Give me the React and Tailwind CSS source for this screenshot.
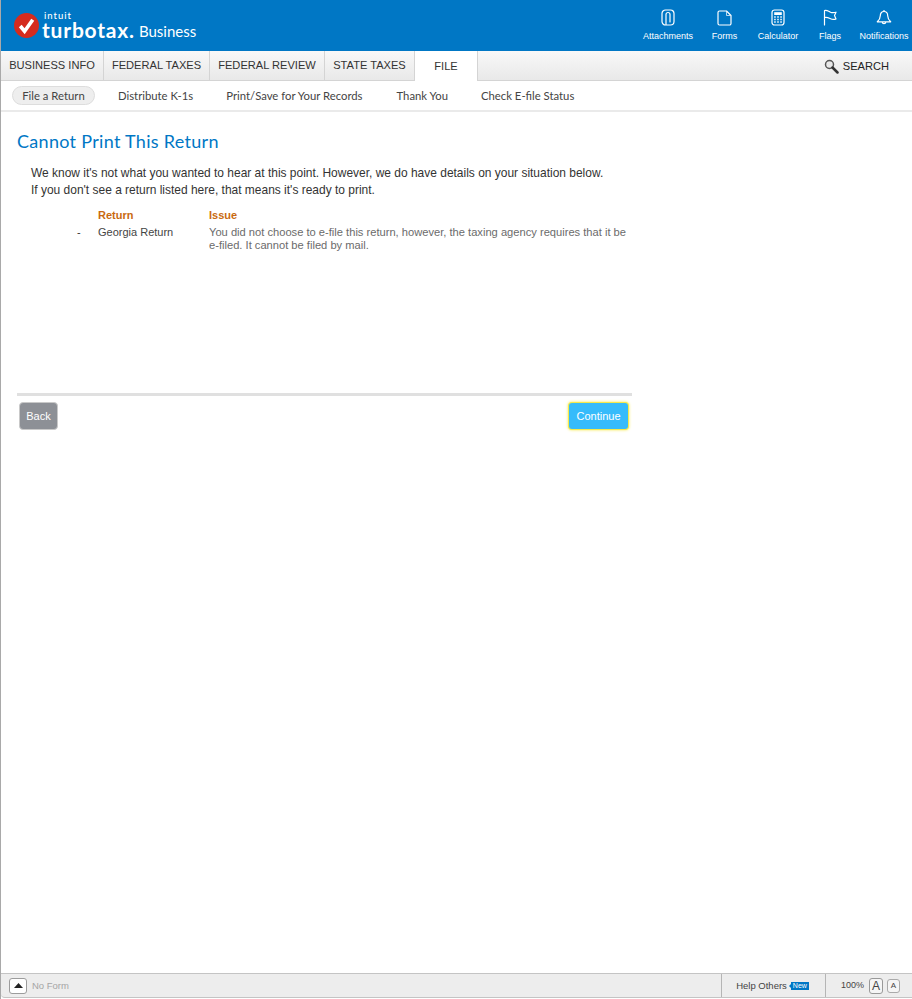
import React from "react";

const IconClip = () => (
  <svg width="14" height="17" viewBox="0 0 14 17" fill="none" stroke="white" strokeWidth="1.200" strokeLinecap="round">
    <path d="M9.500 1H4.500A3.500 3.500 0 0 0 1 4.500v8A3.500 3.500 0 0 0 4.500 16h5a3.500 3.500 0 0 0 3.500-3.500v-8A3.500 3.500 0 0 0 9.500 1z" />
    <path d="M5 15.500V5.500a2 2 0 0 1 4 0V13" />
  </svg>
);

const IconForm = () => (
  <svg width="15" height="16" viewBox="0 0 15 16" fill="none" stroke="white" strokeWidth="1.200" strokeLinejoin="round">
    <path d="M2.500 1H9.500L14 5.500V13.500A1.500 1.500 0 0 1 12.500 15h-10A1.500 1.500 0 0 1 1 13.500v-11A1.500 1.500 0 0 1 2.500 1z" />
    <path d="M9.500 1.500V5.500H13.500" strokeWidth="0.700" />
  </svg>
);

const IconCalc = () => (
  <svg width="14" height="17" viewBox="0 0 14 17" fill="none" stroke="white" strokeWidth="1.200">
    <rect x="1" y="1" width="12" height="15" rx="2.500" />
    <rect x="3.200" y="3.200" width="7.600" height="2.800" fill="white" stroke="none" />
    <path d="M3.200 8h7.600M3.200 10.500h7.600M3.200 13h7.600" strokeWidth="1.300" strokeDasharray="1.500 1.550" />
  </svg>
);

const IconFlag = () => (
  <svg width="15" height="17" viewBox="0 0 15 17" fill="none" stroke="white" strokeWidth="1.200" strokeLinejoin="round" strokeLinecap="round">
    <path d="M1.500 16V1.500C4 1 5.500 2.300 7.500 3.200c2 .8 3.500.6 5.500 0L11.500 6.500 13 10c-2.500 1-4 .5-6-.5C5 8.500 3.500 8 1.500 8.500" />
  </svg>
);

const IconBell = () => (
  <svg width="16" height="17" viewBox="0 0 16 17" fill="none" stroke="white" strokeWidth="1.200" strokeLinejoin="round">
    <path d="M8 2.500c-2.600 0-3.700 2-3.700 4.300 0 2.700-1 4.200-3 6h13.400c-2-1.800-3-3.300-3-6 0-2.300-1.100-4.300-3.700-4.300z" />
    <path d="M8 2.500V1M6.300 13a1.700 1.700 0 0 0 3.400 0" />
  </svg>
);

const IconSearch = () => (
  <svg width="15" height="15" viewBox="0 0 15 15" fill="none">
    <circle cx="5.500" cy="5.500" r="4" stroke="#555" strokeWidth="1.500" fill="#e8e8e8" />
    <path d="M8.500 8.500l5 5" stroke="#333" strokeWidth="2.500" strokeLinecap="round" />
  </svg>
);

const tools = [
  { label: "Attachments", icon: <IconClip />, cls: "w-[58px]" },
  { label: "Forms", icon: <IconForm />, cls: "w-[55px]" },
  { label: "Calculator", icon: <IconCalc />, cls: "w-[52px]" },
  { label: "Flags", icon: <IconFlag />, cls: "w-[52px]" },
  { label: "Notifications", icon: <IconBell />, cls: "w-[56px]" },
];

const tabs = [
  { label: "BUSINESS INFO", cls: "w-[103px]" },
  { label: "FEDERAL TAXES", cls: "w-[106px]" },
  { label: "FEDERAL REVIEW", cls: "w-[115px]" },
  { label: "STATE TAXES", cls: "w-[90px]" },
];

export default function App() {
  return (
    <div className="h-[999px] w-[912px] overflow-hidden flex flex-col bg-white border-l border-[#a9a9a9] font-['Liberation_Sans',sans-serif]">
      <header className="h-[51px] shrink-0 bg-[#0077c5] flex justify-between text-white">
        <div className="flex items-start pl-[13px] pt-[13px]">
          <svg width="25" height="25" viewBox="0 0 26 26">
            <circle cx="13" cy="13" r="13" fill="#d52b1e" />
            <path d="M6.500 13.500l4.500 5.500L19.500 7" fill="none" stroke="white" strokeWidth="3.800" />
          </svg>
          <div className="ml-[3px] -mt-[2px] flex flex-col font-['Lato',sans-serif]">
            <span className="pl-[2px] text-[9.500px] leading-[10px] font-medium tracking-[1px]">intuit</span>
            <span className="mt-[1px] text-[21px] leading-[16px] font-bold tracking-[0.8px] whitespace-nowrap">turbotax.</span>
          </div>
          <span className="ml-[4px] mt-[8px] text-[15px] leading-5 font-['Lato',sans-serif]">Business</span>
        </div>
        <div className="flex">
          {tools.map((t) => (
            <div key={t.label} className={`${t.cls} flex flex-col items-center pt-[9px]`}>
              <div className="h-[17px] flex items-center">{t.icon}</div>
              <span className="mt-[3px] text-[9px] leading-[14px] whitespace-nowrap">{t.label}</span>
            </div>
          ))}
        </div>
      </header>

      <nav className="h-[30px] shrink-0 flex bg-gradient-to-b from-[#f8f8f8] to-[#e9e9e9] border-b border-[#d4d4d4] text-[11.100px] text-[#333]">
        {tabs.map((t) => (
          <div key={t.label} className={`${t.cls} flex items-center justify-center border-r border-[#d4d4d4] whitespace-nowrap`}>
            {t.label}
          </div>
        ))}
        <div className="w-[63px] h-[30px] flex items-center justify-center bg-white border-r border-[#d4d4d4]">FILE</div>
        <div className="flex items-center gap-[4px] ml-auto mr-[23px] pt-[2px] text-[#222]">
          <IconSearch />
          <span>SEARCH</span>
        </div>
      </nav>

      <div className="h-[31px] shrink-0 flex items-center pl-[11px] border-b-2 border-[#eaeaea] text-[11.300px] text-[#444] font-['Lato',sans-serif] whitespace-nowrap">
        <span className="h-[19px] w-[83px] pt-px flex items-center justify-center rounded-full bg-[#eeeeee] border border-[#dddddd]">File a Return</span>
        <span className="ml-[23px] pt-[2px]">Distribute K-1s</span>
        <span className="ml-[33px] pt-[2px]">Print/Save for Your Records</span>
        <span className="ml-[34px] pt-[2px]">Thank You</span>
        <span className="ml-[33px] pt-[2px]">Check E-file Status</span>
      </div>

      <main className="flex-1 pl-[16px] pt-[18px]">
        <div className="w-[615px]">
          <h1 className="text-[18px] leading-[22px] text-[#0077c5] font-['Lato',sans-serif] tracking-[0.3px]">Cannot Print This Return</h1>
          <p className="mt-[13px] pl-[14px] text-[11.970px] leading-[17px] text-[#333] whitespace-nowrap">
            We know it's not what you wanted to hear at this point. However, we do have details on your situation below.
            <br />
            If you don't see a return listed here, that means it's ready to print.
          </p>
          <div className="mt-[6px] grid grid-cols-[21px_111px_1fr] pl-[60px] text-[11px] leading-[13px]">
            <span />
            <span className="font-bold text-[#c96a10] leading-[21px]">Return</span>
            <span className="font-bold text-[#c96a10] leading-[21px]">Issue</span>
            <span className="text-[#333]">-</span>
            <span className="text-[#444]">Georgia Return</span>
            <span className="text-[#6b6b6b] text-[11.150px] w-[425px]">
              You did not choose to e-file this return, however, the taxing agency requires that it be e&#8209;filed. It cannot be filed by mail.
            </span>
          </div>
          <div className="mt-[141px] h-[3px] bg-[#e0e0e0]" />
          <div className="mt-[6px] flex justify-between pl-[2px] pr-[4px]">
            <button className="h-[28px] w-[39px] rounded-[4px] bg-[#8d9096] border border-[#c9c9c9] text-[11px] text-white">Back</button>
            <button className="h-[26px] w-[59px] mt-px rounded-[3px] bg-[#36bbfb] ring-1 ring-[#f5e94a] shadow-[0_0_3px_1px_#f5e94a] text-[11px] text-white">Continue</button>
          </div>
        </div>
      </main>

      <footer className="h-[25px] shrink-0 mb-px flex items-center bg-[#ededed] border-y border-[#c4c4c4] rounded-bl-[4px] text-[9.500px]">
        <button className="ml-[8px] h-[16px] w-[18px] flex items-center justify-center bg-white border border-[#9c9c9c] rounded-[3px]">
          <svg width="9" height="5" viewBox="0 0 9 5"><path d="M0 5L4.500 0 9 5z" fill="#222" /></svg>
        </button>
        <span className="ml-[5px] pt-[2px] text-[#a5a5a5]">No Form</span>
        <div className="ml-auto h-full w-[105px] pr-[2px] flex items-center justify-center border-x border-[#b5b5b5] text-[#444]">
          <span className="pt-px">Help Others</span>
          <svg className="ml-[2px]" width="2" height="4" viewBox="0 0 2 4"><path d="M2 0v4L0 2z" fill="#0077c5" /></svg>
          <span className="h-[8px] px-[2px] flex items-center bg-[#0077c5] text-white text-[7px] leading-none">New</span>
        </div>
        <div className="w-[86px] flex items-center pl-[15px] text-[9px] text-[#444]">
          <span className="pt-px">100%</span>
          <span className="ml-[5px] h-[16px] w-[14px] flex items-center justify-center border border-[#999] rounded-[3px] bg-[#f5f5f5] text-[12px]">A</span>
          <span className="ml-[4px] h-[14px] w-[13px] flex items-center justify-center border border-[#aaa] rounded-[3px] bg-[#f5f5f5] text-[8px]">A</span>
        </div>
      </footer>
    </div>
  );
}
